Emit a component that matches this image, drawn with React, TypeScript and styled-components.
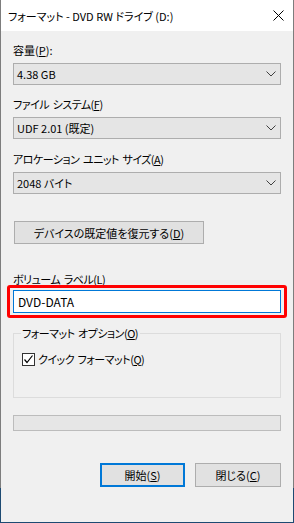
import React from "react";
import styled, { createGlobalStyle } from "styled-components";

const Global = createGlobalStyle`
  html, body { margin: 0; padding: 0; background: #f0f0f0; }
  body { font-family: "Noto Sans CJK JP", "Noto Sans", sans-serif; font-size: 11px; color: #000; }
  * { box-sizing: border-box; }
`;

const Window = styled.div`
  width: 294px;
  height: 523px;
  background: #f0f0f0;
  border-left: 1px solid transparent;
  border-right: 1px solid transparent;
  border-bottom: 1px solid #1d4a72;
  border-image: linear-gradient(to bottom, #7d7d7d 0, #7d7d7d 488px, #1d4a72 488px, #1d4a72 100%) 1;
  display: flex;
  flex-direction: column;
  font-feature-settings: "palt";
`;

const TitleBar = styled.div`
  height: 31px;
  background: #fff;
  display: flex;
  align-items: center;
  padding-left: 7px;
  flex-shrink: 0;
`;

const Title = styled.div`
  flex: 1;
  font-size: 11px;
  line-height: 16px;
  color: #000;
  margin-top: 1px;
  white-space: nowrap;
`;

const CloseBox = styled.div`
  width: 30px;
  height: 31px;
  display: flex;
  align-items: center;
  justify-content: center;
`;

const Content = styled.div`
  padding: 0 12px;
  display: flex;
  flex-direction: column;
`;

const Label = styled.div<{ $top: number; $tight?: boolean }>`
  margin-top: ${(p) => p.$top}px;
  font-size: 11px;
  line-height: 16px;
  height: 16px;
  white-space: nowrap;
  letter-spacing: ${(p) => (p.$tight ? "-0.5px" : "0")};
  word-spacing: ${(p) => (p.$tight ? "1.5px" : "0")};
`;

const U = styled.span`
  text-decoration: underline;
  text-underline-offset: 1px;
`;

const Combo = styled.div<{ $top: number }>`
  margin-top: ${(p) => p.$top}px;
  height: 22px;
  background: #e5e5e5;
  border: 1px solid #adadad;
  display: flex;
  align-items: center;
  justify-content: space-between;
  padding: 0 4px 0 3px;
  font-size: 11px;
  line-height: 16px;
`;

const Chevron = () => (
  <svg width="10" height="6" viewBox="0 0 10 6">
    <path d="M0.5 0.5 L5 5 L9.5 0.5" fill="none" stroke="#404040" strokeWidth="1" />
  </svg>
);

const Button = styled.div<{ $primary?: boolean }>`
  height: 24px;
  background: #e1e1e1;
  border: ${(p) => (p.$primary ? "2px solid #0078d7" : "1px solid #adadad")};
  display: flex;
  align-items: center;
  justify-content: center;
  font-size: 11px;
  line-height: 16px;
  white-space: nowrap;
`;

const DefaultsButton = styled(Button)`
  margin-top: 27px;
  width: 190px;
  margin-left: 1px;
  height: 23px;
`;

const Highlight = styled.div`
  margin: -2px -6px 0 -6px;
  border: 3px solid #ff0000;
  border-radius: 3px;
  padding: 2px 3px;
`;

const TextBox = styled.div`
  height: 23px;
  background: #fff;
  border: 1px solid #0078d7;
  display: flex;
  align-items: center;
  padding-left: 4px;
  font-size: 12px;
  line-height: 16px;
`;

const Group = styled.fieldset`
  margin: 7px 0 0 0;
  padding: 0 0 0 8px;
  border: 1px solid #dcdcdc;
  height: 73px;
  min-width: 0;
`;

const Legend = styled.legend`
  padding: 0 2px 0 1px;
  margin-left: -1px;
  font-size: 11px;
  line-height: 16px;
  letter-spacing: -0.5px;
  word-spacing: 1.5px;
`;

const CheckRow = styled.div`
  margin-top: 10px;
  display: flex;
  align-items: center;
  gap: 3px;
  font-size: 11px;
  line-height: 16px;
  letter-spacing: -0.5px;
  word-spacing: 1.5px;
`;

const CheckBox = styled.div`
  width: 13px;
  height: 13px;
  border: 1px solid #333;
  background: #fff;
  display: flex;
  align-items: center;
  justify-content: center;
`;

const Progress = styled.div`
  margin-top: 17px;
  height: 16px;
  background: #e6e6e6;
  border: 1px solid #bcbcbc;
`;

const ButtonRow = styled.div`
  margin-top: 32px;
  display: flex;
  justify-content: flex-end;
  gap: 10px;
`;

const ActionButton = styled(Button)`
  width: ${(p) => (p.$primary ? 85 : 86)}px;
`;

export default function App() {
  return (
    <>
      <Global />
      <Window>
        <TitleBar>
          <Title>フォーマット - DVD RW ドライブ (D:)</Title>
          <CloseBox>
            <svg width="11" height="11" viewBox="0 0 11 11">
              <path d="M0.5 0.5 L10.5 10.5 M10.5 0.5 L0.5 10.5" stroke="#000" strokeWidth="1" />
            </svg>
          </CloseBox>
        </TitleBar>
        <Content>
          <Label $top={11}>容量(<U>P</U>):</Label>
          <Combo $top={5}>
            <span>4.38 GB</span>
            <Chevron />
          </Combo>
          <Label $top={11} $tight>ファイル システム(<U>F</U>)</Label>
          <Combo $top={5}>
            <span>UDF 2.01 (既定)</span>
            <Chevron />
          </Combo>
          <Label $top={12} $tight>アロケーション ユニット サイズ(<U>A</U>)</Label>
          <Combo $top={5}>
            <span>2048 バイト</span>
            <Chevron />
          </Combo>
          <DefaultsButton>デバイスの既定値を復元する(<U>D</U>)</DefaultsButton>
          <Label $top={27} $tight>ボリューム ラベル(<U>L</U>)</Label>
          <Highlight>
            <TextBox>DVD-DATA</TextBox>
          </Highlight>
          <Group>
            <Legend>フォーマット オプション(<U>O</U>)</Legend>
            <CheckRow>
              <CheckBox>
                <svg width="11" height="11" viewBox="0 0 11 11">
                  <path d="M1.5 5.5 L4 8.5 L9.5 1.5" fill="none" stroke="#000" strokeWidth="1.2" />
                </svg>
              </CheckBox>
              <span>クイック フォーマット(<U>Q</U>)</span>
            </CheckRow>
          </Group>
          <Progress />
          <ButtonRow>
            <ActionButton $primary>開始(<U>S</U>)</ActionButton>
            <ActionButton>閉じる(<U>C</U>)</ActionButton>
          </ButtonRow>
        </Content>
      </Window>
    </>
  );
}
